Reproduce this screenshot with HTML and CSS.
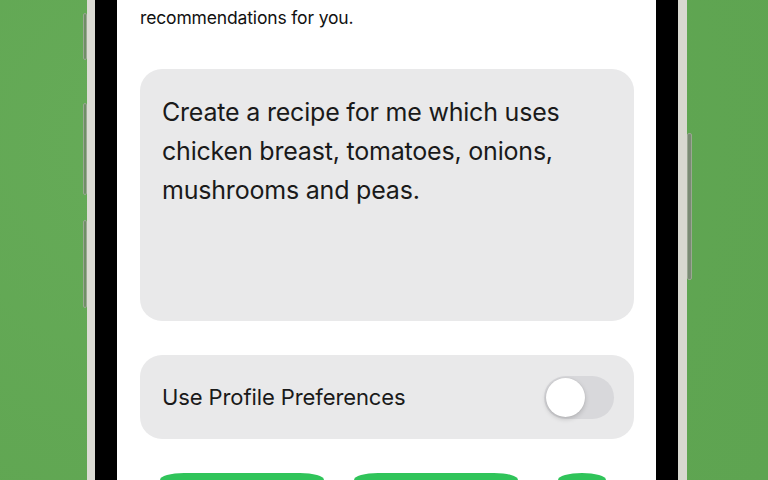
FILE: index.html
```html
<!DOCTYPE html>
<html lang="en">
<head>
<meta charset="utf-8">
<title>Recipe prompt</title>
<link rel="stylesheet" href="styles.css">
</head>
<body>
<div class="stage">
  <div class="phone">
    <span class="btn-side btn-l1"></span>
    <span class="btn-side btn-l2"></span>
    <span class="btn-side btn-l3"></span>
    <span class="btn-side btn-r1"></span>
    <div class="bezel">
      <div class="screen">
        <p class="intro">recommendations for you.</p>
        <div class="prompt-card">
          <p class="prompt-text">Create a recipe for me which uses chicken breast, tomatoes, onions, mushrooms and peas.</p>
        </div>
        <div class="pref-card">
          <span class="pref-label">Use Profile Preferences</span>
          <span class="toggle"><span class="knob"></span></span>
        </div>
        <div class="actions">
          <span class="action wide"></span>
          <span class="action wide"></span>
          <span class="action round"></span>
        </div>
      </div>
    </div>
  </div>
</div>
</body>
</html>
```

FILE: styles.css
```css
html, body {
  margin: 0;
  padding: 0;
}
body {
  width: 768px;
  height: 480px;
  overflow: hidden;
  background: #63a856;
  background-image: radial-gradient(circle at 20% 30%, #66ab58 0%, #60a652 60%, #5ea451 100%);
  font-family: Inter, "Noto Sans", "Liberation Sans", sans-serif;
}
.stage {
  display: flex;
  padding-left: 87px;
  height: 480px;
}
.phone {
  position: relative;
  display: flex;
  height: 480px;
  border-left: 8px solid #dcdcd4;
  border-right: 9px solid #d8d8d0;
  box-shadow: inset 2px 0 0 #b8b8b0, inset -2px 0 0 #b8b8b0;
}
.btn-side {
  position: absolute;
  width: 4px;
  background: #6f8f66;
  border: 1px solid #9aa892;
  box-sizing: border-box;
  border-radius: 2px;
}
.btn-l1 { left: -12px; top: 13px; height: 47px; }
.btn-l2 { left: -12px; top: 103px; height: 92px; }
.btn-l3 { left: -12px; top: 220px; height: 88px; }
.btn-r1 { right: -14px; top: 133px; height: 147px; width: 5px; background: #7a8a74; }
.bezel {
  display: flex;
  background: #000;
  padding: 0 22px;
}
.screen {
  width: 539px;
  height: 480px;
  overflow: hidden;
  background: #fff;
  box-sizing: border-box;
  padding: 0 22px 0 23px;
  display: flex;
  flex-direction: column;
}
.screen > * {
  flex: none;
}
.intro {
  margin: 0;
  padding-top: 6px;
  font-size: 17.5px;
  line-height: 24px;
  color: #111;
  letter-spacing: -0.15px;
}
.prompt-card {
  margin-top: 39px;
  height: 252px;
  background: #e9e9ea;
  border-radius: 22px;
  padding: 24px 22px 0 22px;
  box-sizing: border-box;
}
.prompt-text {
  margin: 0;
  font-size: 25px;
  line-height: 39px;
  color: #1a1a1a;
  letter-spacing: -0.2px;
}
.pref-card {
  margin-top: 34px;
  height: 84px;
  box-sizing: border-box;
  background: #e9e9ea;
  border-radius: 22px;
  display: flex;
  align-items: center;
  justify-content: space-between;
  padding: 0 20px 0 22px;
}
.pref-label {
  font-size: 22px;
  color: #1a1a1a;
  letter-spacing: -0.1px;
}
.toggle {
  width: 70px;
  height: 43px;
  border-radius: 22px;
  background: #d8d8db;
  display: flex;
  align-items: center;
  padding-left: 2px;
  box-sizing: border-box;
}
.knob {
  width: 39px;
  height: 39px;
  border-radius: 50%;
  background: #fff;
  box-shadow: 0 2px 5px rgba(0,0,0,0.18), 0 0 1px rgba(0,0,0,0.15);
}
.actions {
  display: flex;
  gap: 30px;
  margin-top: 34px;
  padding-left: 20px;
}
.action {
  height: 7px;
  background: #30c45a;
  flex: none;
}
.action.wide {
  width: 164px;
  border-radius: 24px 24px 0 0 / 7px 7px 0 0;
}
.action.round {
  width: 48px;
  border-radius: 24px 24px 0 0 / 7px 7px 0 0;
  margin-left: 10px;
}
```
